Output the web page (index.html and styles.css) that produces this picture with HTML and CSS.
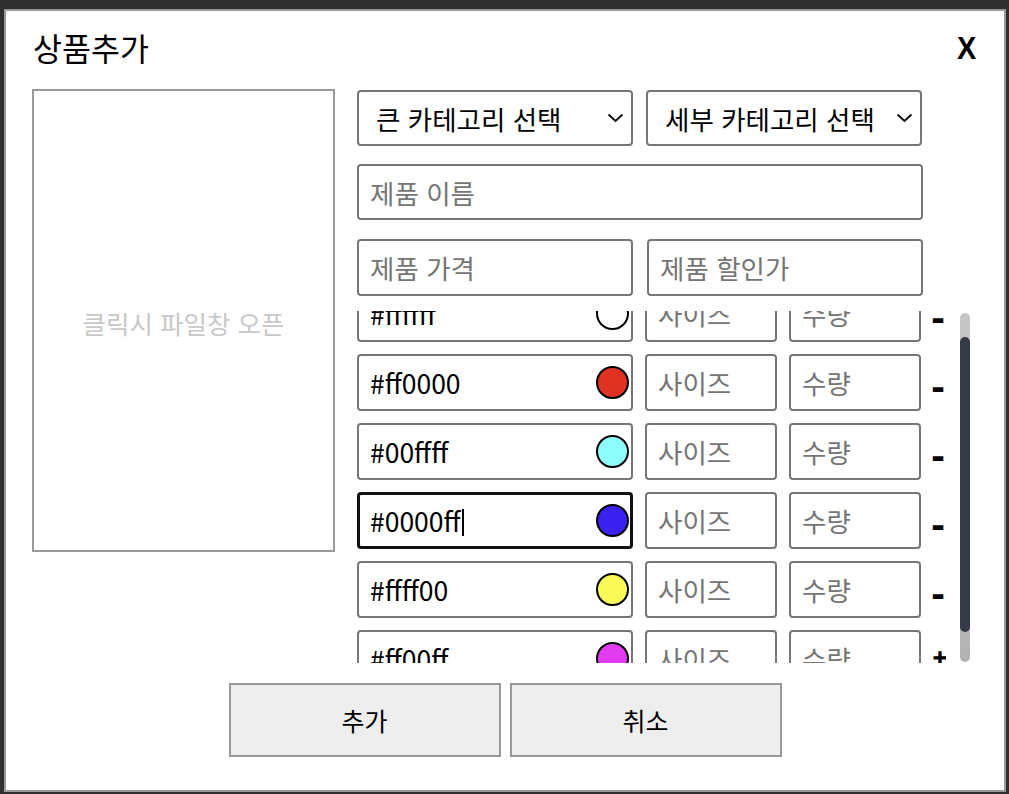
FILE: index.html
```html
<!DOCTYPE html>
<html lang="ko">
<head>
<meta charset="utf-8">
<title>상품추가</title>
<link rel="stylesheet" href="styles.css">
</head>
<body>
<div class="modal">
  <div class="modal-header">
    <h1 class="modal-title">상품추가</h1>
    <span class="close">X</span>
  </div>
  <div class="modal-body">
    <div class="image-box"><span class="image-hint">클릭시 파일창 오픈</span></div>
    <div class="form">
      <div class="row-2">
        <div class="field select"><span>큰 카테고리 선택</span><svg class="chev" width="17" height="10" viewBox="0 0 17 10"><path d="M1.5 1.5 L8.5 8 L15.5 1.5" fill="none" stroke="#111" stroke-width="2"/></svg></div>
        <div class="field select"><span>세부 카테고리 선택</span><svg class="chev" width="17" height="10" viewBox="0 0 17 10"><path d="M1.5 1.5 L8.5 8 L15.5 1.5" fill="none" stroke="#111" stroke-width="2"/></svg></div>
      </div>
      <div class="field wide placeholder">제품 이름</div>
      <div class="row-2 tall">
        <div class="field placeholder">제품 가격</div>
        <div class="field placeholder">제품 할인가</div>
      </div>
      <div class="options">
        <div class="options-list">
          <div class="options-inner">
            <div class="opt-row">
              <div class="field color"><span>#ffffff</span><span class="swatch" style="background:#ffffff"></span></div>
              <div class="field small placeholder">사이즈</div>
              <div class="field small placeholder">수량</div>
              <span class="opt-btn">-</span>
            </div>
            <div class="opt-row">
              <div class="field color"><span>#ff0000</span><span class="swatch" style="background:#df3222"></span></div>
              <div class="field small placeholder">사이즈</div>
              <div class="field small placeholder">수량</div>
              <span class="opt-btn">-</span>
            </div>
            <div class="opt-row">
              <div class="field color"><span>#00ffff</span><span class="swatch" style="background:#8ffcfc"></span></div>
              <div class="field small placeholder">사이즈</div>
              <div class="field small placeholder">수량</div>
              <span class="opt-btn">-</span>
            </div>
            <div class="opt-row">
              <div class="field color focused"><span>#0000ff<span class="caret"></span></span><span class="swatch" style="background:#3b22f0"></span></div>
              <div class="field small placeholder">사이즈</div>
              <div class="field small placeholder">수량</div>
              <span class="opt-btn">-</span>
            </div>
            <div class="opt-row">
              <div class="field color"><span>#ffff00</span><span class="swatch" style="background:#fafa58"></span></div>
              <div class="field small placeholder">사이즈</div>
              <div class="field small placeholder">수량</div>
              <span class="opt-btn">-</span>
            </div>
            <div class="opt-row">
              <div class="field color"><span>#ff00ff</span><span class="swatch" style="background:#e23cf0"></span></div>
              <div class="field small placeholder">사이즈</div>
              <div class="field small placeholder">수량</div>
              <span class="opt-btn plus">+</span>
            </div>
          </div>
        </div>
        <div class="scrollbar"><div class="thumb"></div></div>
      </div>
    </div>
  </div>
  <div class="modal-footer">
    <button class="btn">추가</button>
    <button class="btn">취소</button>
  </div>
</div>
</body>
</html>
```

FILE: styles.css
```css
* { box-sizing: border-box; }

html, body {
  margin: 0;
  padding: 0;
  background: #303030;
  font-family: "Noto Sans CJK KR", "Noto Sans", sans-serif;
}

.modal {
  width: 1002px;
  height: 783px;
  margin: 9px 0 0 4px;
  background: #fff;
  border: 2px solid #999;
  padding: 0 26px;
  display: flex;
  flex-direction: column;
}

.modal-header {
  height: 74px;
  display: flex;
  align-items: center;
  justify-content: space-between;
  padding-left: 1px;
}

.modal-title {
  margin: 0;
  font-size: 31.5px;
  font-weight: 400;
  color: #000;
  line-height: 1;
}

.close {
  font-family: "Liberation Sans", Arial, sans-serif;
  font-weight: 700;
  font-size: 32px;
  line-height: 1;
  color: #000;
  margin-right: 1px;
  transform: scaleX(0.9);
}

.modal-body {
  margin-top: 4px;
  display: flex;
  gap: 22px;
  height: 574px;
}

.image-box {
  width: 303px;
  height: 463px;
  border: 2px solid #999;
  display: flex;
  align-items: center;
  justify-content: center;
}

.image-hint {
  font-size: 25.5px;
  color: #c8c8c8;
  margin-top: 4px;
}

.form {
  margin-top: 1px;
  width: 615px;
  display: flex;
  flex-direction: column;
}

.row-2 {
  display: flex;
  gap: 13px;
  width: 565px;
  height: 56px;
}

.row-2.tall {
  width: 566px;
  height: 57px;
  gap: 14px;
  margin-top: 19px;
}

.field {
  border: 2px solid #767676;
  border-radius: 4px;
  font-size: 26.5px;
  color: #000;
  display: flex;
  align-items: center;
  padding-left: 11px;
  height: 100%;
  flex: 1;
  white-space: nowrap;
  overflow: hidden;
}

.placeholder { color: #757575; }

.select {
  padding-left: 17px;
  padding-right: 7px;
  justify-content: space-between;
}

.chev { flex: none; }

.wide {
  width: 566px;
  height: 56px;
  flex: none;
  margin-top: 18px;
}

.options {
  margin-top: 15px;
  height: 352px;
  display: flex;
}

.options-list {
  width: 589px;
  height: 352px;
  overflow: hidden;
}

.options-inner {
  margin-top: -26px;
  display: flex;
  flex-direction: column;
  gap: 12px;
}

.opt-row {
  display: flex;
  gap: 12px;
  height: 57px;
  flex: none;
}

.field.color {
  width: 276px;
  flex: none;
  justify-content: space-between;
  padding-right: 2px;
}

.field.focused {
  border: 3px solid #111;
  padding-left: 10px;
  padding-right: 1px;
}

.caret {
  display: inline-block;
  width: 2px;
  height: 27px;
  background: #000;
  vertical-align: middle;
  margin-left: 1px;
  position: relative;
  top: -2px;
}

.swatch {
  width: 33px;
  height: 33px;
  border-radius: 50%;
  border: 2px solid #000;
  flex: none;
}

.field.small {
  width: 132px;
  flex: none;
}

.opt-btn {
  font-family: "DejaVu Sans", sans-serif;
  font-weight: 700;
  font-size: 34px;
  line-height: 1;
  align-self: center;
  margin-top: 8px;
  margin-left: -2px;
  width: 16px;
}

.opt-btn.plus {
  font-size: 19px;
  font-weight: 900;
  margin-top: -2px;
  margin-left: -1px;
  -webkit-text-stroke: 1px #000;
}

.scrollbar {
  margin-left: 14px;
  margin-top: 2px;
  width: 10px;
  height: 349px;
  border-radius: 5px;
  background: linear-gradient(#c6c6c6, #b3b3b3);
  padding-top: 24px;
}

.thumb {
  width: 10px;
  height: 295px;
  border-radius: 5px;
  background: #343a48;
}

.modal-footer {
  margin-top: 20px;
  display: flex;
  justify-content: center;
  gap: 9px;
}

.btn {
  width: 272px;
  height: 74px;
  border: 2px solid #999;
  background: #eee;
  font-family: "Noto Sans CJK KR", "Noto Sans", sans-serif;
  font-size: 25px;
  color: #000;
  padding: 0;
}
```
